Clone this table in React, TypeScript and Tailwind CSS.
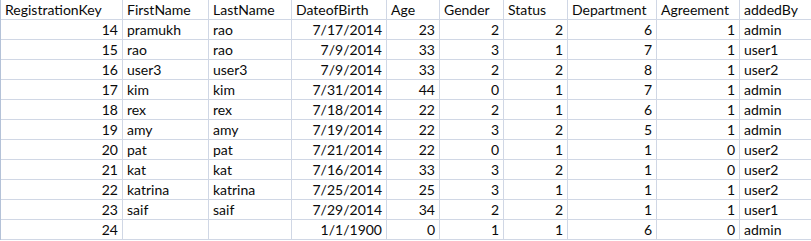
import React from "react";

const headers = [
  "RegistrationKey",
  "FirstName",
  "LastName",
  "DateofBirth",
  "Age",
  "Gender",
  "Status",
  "Department",
  "Agreement",
  "addedBy",
];

const rows: (string | number)[][] = [
  [14, "pramukh", "rao", "7/17/2014", 23, 2, 2, 6, 1, "admin"],
  [15, "rao", "rao", "7/9/2014", 33, 3, 1, 7, 1, "user1"],
  [16, "user3", "user3", "7/9/2014", 33, 2, 2, 8, 1, "user2"],
  [17, "kim", "kim", "7/31/2014", 44, 0, 1, 7, 1, "admin"],
  [18, "rex", "rex", "7/18/2014", 22, 2, 1, 6, 1, "admin"],
  [19, "amy", "amy", "7/19/2014", 22, 3, 2, 5, 1, "admin"],
  [20, "pat", "pat", "7/21/2014", 22, 0, 1, 1, 0, "user2"],
  [21, "kat", "kat", "7/16/2014", 33, 3, 2, 1, 0, "user2"],
  [22, "katrina", "katrina", "7/25/2014", 25, 3, 1, 1, 1, "user2"],
  [23, "saif", "saif", "7/29/2014", 34, 2, 2, 1, 1, "user1"],
  [24, "", "", "1/1/1900", 0, 1, 1, 6, 0, "admin"],
];

const rightCols = new Set([0, 3, 4, 5, 6, 7, 8]);

export default function App() {
  return (
    <div className="w-[811px] h-[241px] overflow-hidden bg-white">
      <div
        className="grid grid-cols-[122px_86px_83px_95px_53px_64px_64px_89px_83px_90px] border-l border-[#b4c2d8] w-max text-[14px] text-[#0a0a0a]"
        style={{ fontFamily: "Lato, 'Open Sans', sans-serif" }}
      >
        {headers.map((h, i) => (
          <div
            key={"h" + i}
            className="h-[20px] border-r border-b border-[#d0d7e5] px-[4px] pt-[1px] flex items-center leading-none whitespace-nowrap overflow-hidden"
          >
            {h}
          </div>
        ))}
        {rows.map((r, ri) =>
          r.map((c, ci) => (
            <div
              key={ri + "-" + ci}
              className={
                "h-[20px] border-r border-b border-[#d0d7e5] pt-[1px] flex items-center leading-none whitespace-nowrap overflow-hidden " +
                (rightCols.has(ci) ? "justify-end pr-[4px] pl-[3px]" : "px-[4px]")
              }
            >
              {c}
            </div>
          ))
        )}
      </div>
    </div>
  );
}
